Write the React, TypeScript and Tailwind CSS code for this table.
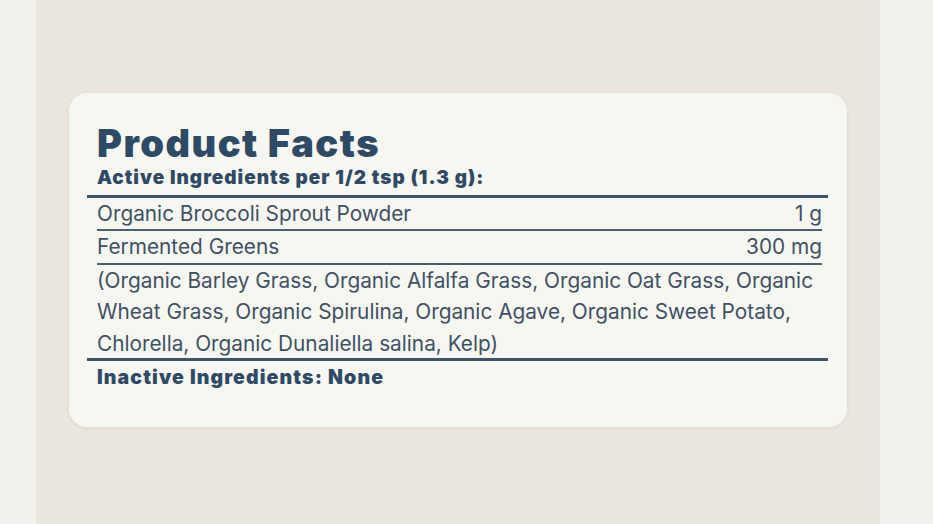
export default function App() {
  return (
    <div
      className="w-[933px] h-[524px] bg-[#f2f0eb] flex justify-start"
      style={{ fontFamily: 'Inter, "Noto Sans", sans-serif' }}
    >
      <div className="ml-[36px] w-[844px] h-full bg-[#ebe6df] pt-[93px]">
        <div className="mx-[33px] h-[334px] rounded-[18px] bg-[#f7f7f2] shadow-[0_1px_4px_rgba(0,0,0,0.08)] pl-[28px] pr-[25px] pt-[30px]">
          <h1 className="text-[38px] leading-[40px] font-black text-[#2e4a65] tracking-[1.5px]">
            Product Facts
          </h1>
          <div className="mt-[3px] mb-[5px] text-[19px] leading-[24px] font-black text-[#2e4a65] tracking-[1px]">
            Active Ingredients per 1/2 tsp (1.3 g):
          </div>
          <div className="h-[3px] bg-[#3c5368] -ml-[10px] -mr-[6px]" />
          <div className="flex justify-between h-[31px] text-[20.8px] leading-[31px] text-[#3f5164]">
            <span>Organic Broccoli Sprout Powder</span>
            <span>1 g</span>
          </div>
          <div className="h-[2px] bg-[#4b5f72]" />
          <div className="flex justify-between h-[32px] text-[20.8px] leading-[32px] text-[#3f5164]">
            <span>Fermented Greens</span>
            <span>300 mg</span>
          </div>
          <div className="h-[2px] bg-[#4b5f72]" />
          <p className="h-[93px] text-[20.8px] leading-[31.3px] text-[#3f5164]">
            (Organic Barley Grass, Organic Alfalfa Grass, Organic Oat Grass, Organic Wheat Grass,
            Organic Spirulina, Organic Agave, Organic Sweet Potato, Chlorella, Organic Dunaliella
            salina, Kelp)
          </p>
          <div className="h-[3px] bg-[#3c5368] -ml-[10px] -mr-[6px]" />
          <div className="pt-[4px] text-[19.5px] leading-[24px] font-black text-[#2e4a65] tracking-[1.1px]">
            Inactive Ingredients: None
          </div>
        </div>
      </div>
    </div>
  );
}
